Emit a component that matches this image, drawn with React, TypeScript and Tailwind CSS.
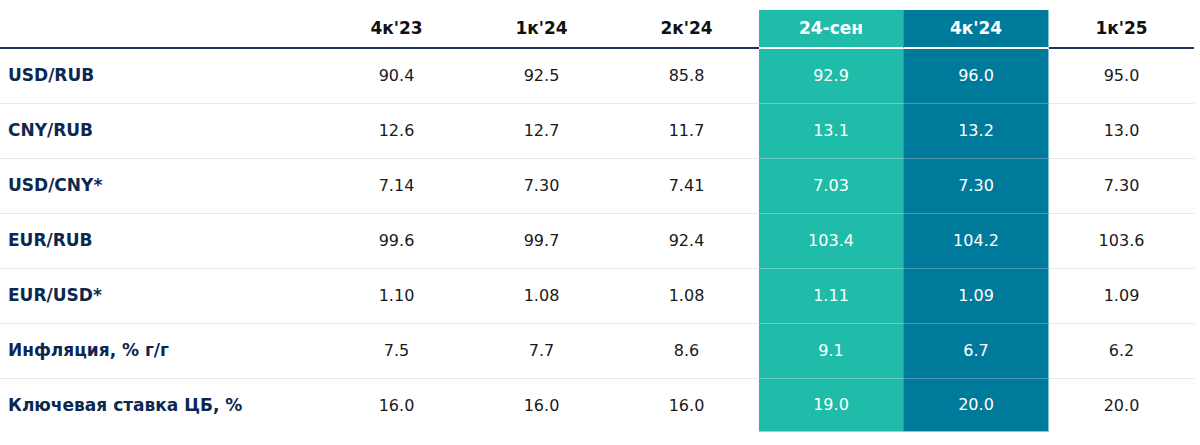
import React from "react";

type Row = { label: string; values: string[] };

const headers = ["4к'23", "1к'24", "2к'24", "24-сен", "4к'24", "1к'25"];

const rows: Row[] = [
  { label: "USD/RUB", values: ["90.4", "92.5", "85.8", "92.9", "96.0", "95.0"] },
  { label: "CNY/RUB", values: ["12.6", "12.7", "11.7", "13.1", "13.2", "13.0"] },
  { label: "USD/CNY*", values: ["7.14", "7.30", "7.41", "7.03", "7.30", "7.30"] },
  { label: "EUR/RUB", values: ["99.6", "99.7", "92.4", "103.4", "104.2", "103.6"] },
  { label: "EUR/USD*", values: ["1.10", "1.08", "1.08", "1.11", "1.09", "1.09"] },
  { label: "Инфляция, % г/г", values: ["7.5", "7.7", "8.6", "9.1", "6.7", "6.2"] },
  { label: "Ключевая ставка ЦБ, %", values: ["16.0", "16.0", "16.0", "19.0", "20.0", "20.0"] },
];

const font = { fontFamily: '"DejaVu Sans", "Noto Sans", sans-serif' };

function headerCellClass(i: number) {
  if (i === 3)
    return "w-[145px] h-[39px] flex items-center justify-center bg-[#1fbca9] text-white border-b-2 border-white border-r border-r-[#1aa998]";
  if (i === 4)
    return "w-[145px] h-[39px] flex items-center justify-center bg-[#007a9b] text-white border-b-2 border-white border-r border-r-[#86c6d6]";
  return "w-[145px] h-[39px] flex items-center justify-center text-[#111111] border-b-2 border-[#1f3560]";
}

function cellClass(i: number, last: boolean) {
  const base = "w-[145px] flex items-center justify-center text-[16px] ";
  const h = last ? "h-[53px] " : "h-[55px] ";
  if (i === 3)
    return base + h + "bg-[#1fbca9] text-white border-r border-r-[#1aa998] " + (last ? "border-b border-b-[#8fd9cf]" : "border-b border-b-[#62cfc1]");
  if (i === 4)
    return base + h + "bg-[#007a9b] text-white border-r border-r-[#86c6d6] " + (last ? "border-b border-b-[#86c6d6]" : "border-b border-b-[#4a9ab2]");
  return base + h + "text-[#1a1a1a] " + (last ? "" : "border-b border-b-[#e8e8e8]");
}

export default function App() {
  return (
    <div className="w-[1200px] h-[445px] bg-white pt-[10px]" style={font}>
      <div className="w-[1194px] flex flex-col">
        <div className="flex">
          <div className="w-[324px] h-[39px] border-b-2 border-[#1f3560]" />
          {headers.map((h, i) => (
            <div key={h} className={headerCellClass(i) + " text-[17px] font-bold"}>
              {h}
            </div>
          ))}
        </div>
        {rows.map((r, ri) => {
          const last = ri === rows.length - 1;
          return (
            <div key={r.label} className="flex">
              <div
                className={
                  "w-[324px] flex items-center pl-[8px] text-[17px] font-bold text-[#0c2850] " +
                  (last ? "h-[53px]" : "h-[55px] border-b border-b-[#e8e8e8]")
                }
              >
                {r.label}
              </div>
              {r.values.map((v, i) => (
                <div key={i} className={cellClass(i, last)}>
                  {v}
                </div>
              ))}
            </div>
          );
        })}
      </div>
    </div>
  );
}
